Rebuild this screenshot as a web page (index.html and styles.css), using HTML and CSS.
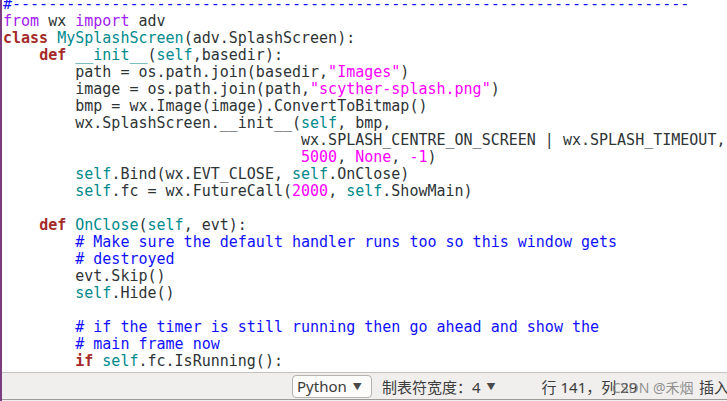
FILE: index.html
```html
<!DOCTYPE html>
<html lang="zh-CN">
<head>
    <meta charset="UTF-8">
    <meta name="viewport" content="width=device-width, initial-scale=1.0">
    <title>splash.py - gedit</title>
    <link rel="stylesheet" href="styles.css">
</head>
<body>
    <div class="window">
        <div class="editor">
<pre class="code"><span class="cm">#---------------------------------------------------------------------------</span>
<span class="pp">from</span> wx <span class="pp">import</span> adv
<span class="kw">class</span> <span class="fn">MySplashScreen</span>(adv.SplashScreen):
    <span class="kw">def</span> <span class="fn">__init__</span>(<span class="fn">self</span>,basedir):
        path = os.path.join(basedir,<span class="st">"Images"</span>)
        image = os.path.join(path,<span class="st">"scyther-splash.png"</span>)
        bmp = wx.Image(image).ConvertToBitmap()
        wx.SplashScreen.__init__(<span class="fn">self</span>, bmp,
                                 wx.SPLASH_CENTRE_ON_SCREEN | wx.SPLASH_TIMEOUT,
                                 <span class="st">5000</span>, <span class="st">None</span>, <span class="st">-1</span>)
        <span class="fn">self</span>.Bind(wx.EVT_CLOSE, <span class="fn">self</span>.OnClose)
        <span class="fn">self</span>.fc = wx.FutureCall(<span class="st">2000</span>, <span class="fn">self</span>.ShowMain)

    <span class="kw">def</span> <span class="fn">OnClose</span>(<span class="fn">self</span>, evt):
        <span class="cm"># Make sure the default handler runs too so this window gets</span>
        <span class="cm"># destroyed</span>
        evt.Skip()
        <span class="fn">self</span>.Hide()

        <span class="cm"># if the timer is still running then go ahead and show the</span>
        <span class="cm"># main frame now</span>
        <span class="kw">if</span> <span class="fn">self</span>.fc.IsRunning():</pre>
        </div>
        <div class="statusbar">
            <div class="lang-btn">Python <span class="caret">&#9660;</span></div>
            <div class="tabwidth">制表符宽度：4 <span class="caret">&#9660;</span></div>
            <div class="position">行 141，列 29</div>
            <div class="mode">插入</div>
            <div class="watermark">CSDN @禾烟</div>
        </div>
    </div>
</body>
</html>
```

FILE: styles.css
```css
body{
    margin: 0;
    background-color: #f0efee;
}

.window{
    width: 725px;
    height: 401px;
    border-left: 2px solid #7b3d80;
    display: flex;
    flex-direction: column;
    overflow: hidden;
}

.editor{
    height: 372px;
    background-color: #ffffff;
    overflow: hidden;
}

.code{
    margin: -4px 0 0 0;
    padding-left: 1px;
    font-family: "DejaVu Sans Mono", monospace;
    font-size: 15px;
    line-height: 17px;
    color: #2e3436;
    white-space: pre;
}

.cm{
    color: #1010ff;
}

.pp{
    color: #a020f0;
}

.kw{
    color: #a52a2a;
    font-weight: bold;
}

.fn{
    color: #008a8c;
}

.st{
    color: #ff00ff;
}

.statusbar{
    position: relative;
    height: 26px;
    border-top: 1px solid #c3c2c0;
    border-bottom: 1px solid #9c9b99;
    background-color: #f0efee;
    display: flex;
    align-items: center;
    font-family: "Noto Sans", "Noto Sans CJK SC", sans-serif;
    font-size: 15px;
    color: #3c3c3c;
}

.lang-btn{
    margin-left: 290px;
    margin-top: 1px;
    width: 74px;
    height: 21px;
    padding-left: 4px;
    border: 1px solid #b4b3b1;
    border-radius: 4px;
    background-color: #fbfbfa;
    display: flex;
    align-items: center;
    line-height: 21px;
}

.caret{
    font-size: 9px;
    margin-left: 6px;
    color: #4a4a4a;
}

.tabwidth{
    margin-left: 10px;
    display: flex;
    align-items: center;
}

.position{
    margin-left: 46px;
}

.mode{
    margin-left: auto;
    margin-right: -2px;
}

.watermark{
    position: absolute;
    left: 610px;
    top: 4px;
    font-size: 14px;
    color: rgba(120, 120, 120, 0.8);
}
```
